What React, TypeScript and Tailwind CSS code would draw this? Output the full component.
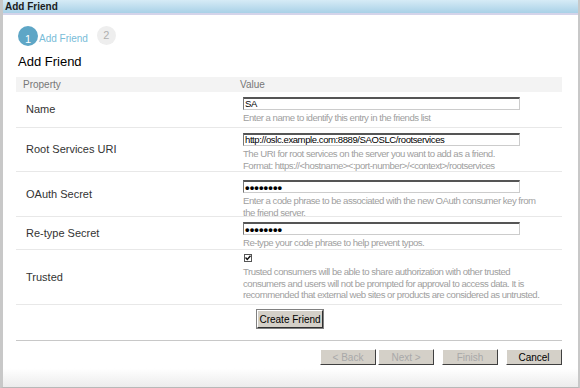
import type { FC, ReactNode } from 'react';

const font = { fontFamily: '"Liberation Sans", Arial, sans-serif' };

type RowProps = {
  label: string;
  h: string;
  children: ReactNode;
};

const Row: FC<RowProps> = ({ label, h, children }) => (
  <div className={`flex border-b border-[#e8e8e8] ${h}`}>
    <div className="flex w-[224px] shrink-0 items-center pl-[10px] text-[11px] text-[#333]">{label}</div>
    <div className="min-w-0 flex-1 pt-[5px]">{children}</div>
  </div>
);

const Field: FC<{ value: string; secret?: boolean }> = ({ value, secret }) => (
  <div
    className={`ml-[3px] flex h-[13px] w-[277px] items-center overflow-hidden border-t-2 border-l border-r border-b border-t-[#555] border-l-[#777] border-r-[#ccc] border-b-[#ccc] bg-white pl-[1px] leading-none text-black ${
      secret ? 'text-[13px] font-bold tracking-[0.1px]' : 'text-[9.5px] tracking-[-0.4px]'
    }`}
  >
    {value}
  </div>
);

const Hint: FC<{ children: ReactNode }> = ({ children }) => (
  <div className="ml-[3px] mt-[2px] whitespace-nowrap text-[9.6px] leading-[11.5px] tracking-[-0.5px] text-[#a0a0a0]">
    {children}
  </div>
);

const WinButton: FC<{ label: string; disabled?: boolean }> = ({ label, disabled }) => (
  <div
    className={`flex h-[16px] w-[56px] items-center justify-center border border-t-white border-l-white border-r-[#404040] border-b-[#404040] bg-[#d4d0c8] text-[10px] ${
      disabled ? 'text-[#a8a8a8]' : 'text-black'
    }`}
  >
    {label}
  </div>
);

export default function App() {
  return (
    <div className="h-[388px] w-[580px] overflow-hidden bg-white" style={font}>
      <div className="flex h-full flex-col border-l-[3px] border-r-[2px] border-b border-l-[#c8c8c8] border-r-[#c8c8c8] border-b-[#b8b8b8]">
        <div className="flex h-[15px] items-center border-b-2 border-b-[#d4d4ea] bg-gradient-to-b from-[#d6ebf6] to-[#a9d1e7] pl-[2px] text-[10px] font-bold text-[#1c1c1c]">
          Add Friend
        </div>

        <div className="flex flex-1 flex-col bg-gradient-to-b from-white from-[95%] to-[#ececec] pl-[13px] pr-[16px]">
          <div className="mt-[10px] flex items-center">
            <div className="ml-[2px] flex h-[20px] w-[20px] items-end justify-center rounded-full bg-[#5ea6c6] pb-[1px] text-[11px] leading-none text-white">
              1
            </div>
            <span className="ml-[1px] mt-[6px] text-[10px] text-[#78bcd8]">Add Friend</span>
            <div className="ml-[9px] flex h-[19px] w-[19px] items-center justify-center rounded-full bg-[#eeeeee] text-[11px] text-[#b0b0b0]">
              2
            </div>
          </div>

          <h1 className="ml-[2px] mt-[7px] text-[13px] leading-[17px] text-black">Add Friend</h1>

          <div className="mt-[7px] flex flex-col">
            <div className="flex h-[15px] items-center bg-[#f3f3f3] text-[10px] text-[#777]">
              <div className="w-[224px] shrink-0 pl-[7px]">Property</div>
              <div>Value</div>
            </div>

            <Row label="Name" h="h-[36px]">
              <Field value="SA" />
              <Hint>Enter a name to identify this entry in the friends list</Hint>
            </Row>

            <Row label="Root Services URI" h="h-[44px]">
              <Field value="http://oslc.example.com:8889/SAOSLC/rootservices" />
              <Hint>
                The URI for root services on the server you want to add as a friend.
                <br />
                Format: https://&lt;hostname&gt;&lt;:port-number&gt;/&lt;context&gt;/rootservices
              </Hint>
            </Row>

            <Row label="OAuth Secret" h="h-[45px]">
              <div className="pt-[3px]">
                <Field value="••••••••" secret />
              </div>
              <Hint>
                Enter a code phrase to be associated with the new OAuth consumer key from
                <br />
                the friend server.
              </Hint>
            </Row>

            <Row label="Re-type Secret" h="h-[33px]">
              <Field value="••••••••" secret />
              <Hint>Re-type your code phrase to help prevent typos.</Hint>
            </Row>

            <Row label="Trusted" h="h-[55px]">
              <div className="ml-[4px] mt-[-1px] flex h-[8px] w-[8px] items-center justify-center border border-[#555] bg-white">
                <svg width="6" height="6" viewBox="0 0 6 6">
                  <path d="M0.5 2.5 L2.3 4.5 L5.5 0.8" stroke="#111" strokeWidth="1.4" fill="none" />
                </svg>
              </div>
              <div className="ml-[3px] mt-[4px] whitespace-nowrap text-[9.6px] leading-[11.5px] tracking-[-0.5px] text-[#a0a0a0]">
                Trusted consumers will be able to share authorization with other trusted
                <br />
                consumers and users will not be prompted for approval to access data. It is
                <br />
                recommended that external web sites or products are considered as untrusted.
              </div>
            </Row>

            <div className="flex h-[36px] border-b border-[#c8c8c8] pt-[5px]">
              <div className="ml-[241px] flex h-[18px] w-[66px] items-center justify-center border border-t-white border-l-white border-r-[#303030] border-b-[#303030] bg-[#d4d0c8] text-[10px] text-black shadow-[0_0_0_1px_#808080]">
                Create Friend
              </div>
            </div>

            <div className="mt-[8px] flex justify-end">
              <WinButton label="< Back" disabled />
              <div className="ml-[2px]">
                <WinButton label="Next >" disabled />
              </div>
              <div className="ml-[8px]">
                <WinButton label="Finish" disabled />
              </div>
              <div className="ml-[8px]">
                <WinButton label="Cancel" />
              </div>
            </div>
          </div>
        </div>
      </div>
    </div>
  );
}
